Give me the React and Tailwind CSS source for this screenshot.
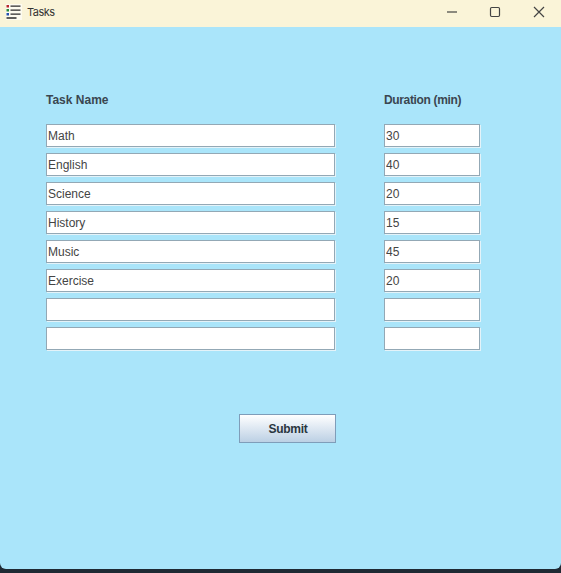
const tasks = [
  ['Math', '30'],
  ['English', '40'],
  ['Science', '20'],
  ['History', '15'],
  ['Music', '45'],
  ['Exercise', '20'],
  ['', ''],
  ['', ''],
];

const fieldClass =
  'h-[23px] bg-white pl-[1px] pr-[1px] pt-[1px] text-[12px] text-[#444444] outline-none border border-[#93a8b5] shadow-[1px_1px_0_#e4f3f9]';

function TaskIcon() {
  return (
    <svg width="16" height="16" viewBox="0 0 16 16" className="bg-[#fdfbf0]">
      <rect x="0.5" y="1" width="2.5" height="2.5" fill="#b8262c" />
      <rect x="0.5" y="5" width="2.5" height="2.5" fill="#2c8a3e" />
      <rect x="0.5" y="9" width="2.5" height="2.5" fill="#2450b0" />
      <path d="M4.5 2.2h10M4.5 6.2h10M4.5 10.2h10M0.5 14h10" stroke="#2b2b2b" strokeWidth="1.3" />
    </svg>
  );
}

export default function App() {
  return (
    <div className="w-[561px] h-[573px] flex flex-col bg-[#1f2933] overflow-hidden font-['Liberation_Sans',Arial,sans-serif]">
      {/* Title bar */}
      <div className="h-[27px] shrink-0 flex items-center bg-[#faf4d8] pl-[6px] pb-[3px]">
        <TaskIcon />
        <span className="ml-[5px] mt-[1px] text-[11px] tracking-[-0.5px] text-[#333333] font-['Inter',sans-serif]">Tasks</span>
        <div className="ml-auto flex items-center">
          <button className="w-[44px] h-[24px] flex items-center justify-center pl-[2px]">
            <svg width="12" height="12" viewBox="0 0 12 12">
              <path d="M1 6h10" stroke="#444444" strokeWidth="1.2" />
            </svg>
          </button>
          <button className="w-[44px] h-[24px] flex items-center justify-center">
            <svg width="12" height="12" viewBox="0 0 12 12">
              <rect x="1.5" y="1.5" width="9" height="9" rx="1.2" fill="none" stroke="#444444" strokeWidth="1.2" />
            </svg>
          </button>
          <button className="w-[44px] h-[24px] flex items-center justify-center">
            <svg width="12" height="12" viewBox="0 0 12 12">
              <path d="M1 1l10 10M11 1L1 11" stroke="#444444" strokeWidth="1.2" />
            </svg>
          </button>
        </div>
      </div>

      {/* Form */}
      <div className="h-[542px] shrink-0 bg-[#aae5fa] rounded-b-[6px] pl-[46px] pt-[66px]">
        <div className="grid grid-cols-[289px_96px] gap-x-[49px] gap-y-[6px]">
          <div className="h-[14px] mb-[11px] text-[12px] leading-[14px] font-bold text-[#3a4650]">Task Name</div>
          <div className="h-[14px] mb-[11px] text-[12px] leading-[14px] font-bold tracking-[-0.35px] text-[#3a4650]">Duration (min)</div>
          {tasks.map(([name, minutes], i) => (
            <div key={i} className="contents">
              <input readOnly value={name} className={`${fieldClass} w-[289px]`} />
              <input readOnly value={minutes} className={`${fieldClass} w-[96px]`} />
            </div>
          ))}
        </div>
        <button className="mt-[64px] ml-[193px] w-[97px] h-[29px] pl-[1px] border border-[#7f9db9] bg-gradient-to-b from-white to-[#bcd0e4] text-[12px] tracking-[-0.25px] font-bold text-[#2a3640]">
          Submit
        </button>
      </div>
    </div>
  );
}
